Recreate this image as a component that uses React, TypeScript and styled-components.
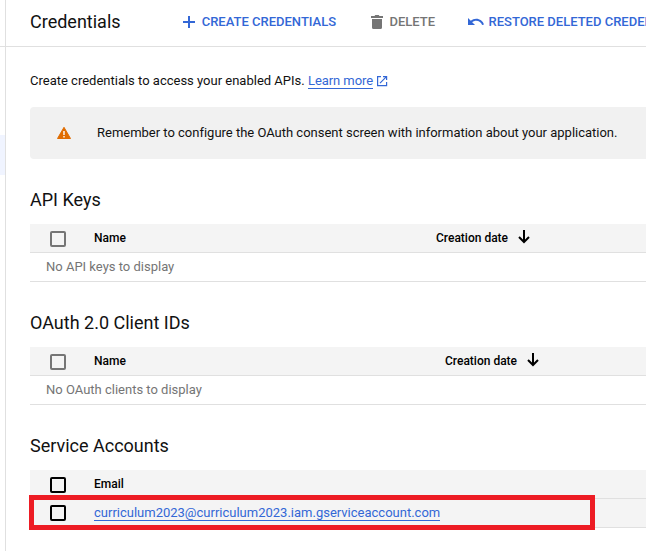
import React from "react";
import styled, { createGlobalStyle } from "styled-components";

const BLUE = "#3367d6";
const LINE = "#e0e0e0";

const GlobalStyle = createGlobalStyle`
  * { box-sizing: border-box; }
  html, body { margin: 0; overflow: hidden; background: #fff; }
  body { font-family: Roboto, "Liberation Sans", sans-serif; font-size: 13px; color: #111; }
  svg { display: block; flex: none; }
`;

const Page = styled.div`
  display: flex;
  width: 646px;
  height: 551px;
  overflow: hidden;
`;

const SideNav = styled.nav`
  flex: none;
  width: 6px;
  border-right: 1px solid ${LINE};
`;

const SideNavHeader = styled.div`
  height: 47px;
  border-bottom: 1px solid ${LINE};
`;

const SideNavActive = styled.div`
  height: 40px;
  margin-top: 88px;
  background: #f0f4ff;
`;

const Main = styled.main`
  flex: 1;
  min-width: 0;
`;

const Toolbar = styled.header`
  display: flex;
  align-items: center;
  height: 47px;
  padding: 0 0 3px 24px;
  border-bottom: 1px solid ${LINE};
  white-space: nowrap;
  overflow: hidden;
`;

const PageTitle = styled.h1`
  flex: none;
  width: 151px;
  margin: 0;
  font-size: 18px;
  font-weight: 400;
  line-height: 24px;
`;

const ToolButton = styled.button<{ $width: number; $gap: number; $muted?: boolean }>`
  display: flex;
  flex: none;
  align-items: center;
  gap: ${(p) => p.$gap}px;
  width: ${(p) => p.$width}px;
  padding: 0;
  border: 0;
  background: none;
  color: ${(p) => (p.$muted ? "#757575" : BLUE)};
  font: 500 13px/16px Roboto, sans-serif;
  white-space: nowrap;
`;

const Content = styled.div`
  padding-left: 24px;
`;

const Intro = styled.p`
  display: flex;
  align-items: center;
  height: 20px;
  margin: 24px 0 0;
  line-height: 20px;
  white-space: pre;
`;

const Link = styled.a`
  color: ${BLUE};
  line-height: 15px;
  border-bottom: 1px solid ${BLUE};
  text-decoration: none;
`;

const LearnMore = styled(Link)`
  letter-spacing: -0.06px;
`;

const LaunchIcon = styled.svg`
  margin-left: 3px;
`;

const Banner = styled.div`
  display: flex;
  align-items: center;
  height: 52px;
  margin-top: 16px;
  padding-left: 26px;
  gap: 25px;
  border-radius: 4px 0 0 4px;
  background: #f1f1f1;
  white-space: nowrap;
`;

const BannerText = styled.span`
  padding-bottom: 2px;
  letter-spacing: -0.01px;
`;

const Section = styled.section`
  margin-top: 29px;
`;

const SectionTitle = styled.h2`
  height: 24px;
  margin: 0 0 12px;
  font-size: 18px;
  font-weight: 400;
  line-height: 24px;
`;

const HeaderRow = styled.div`
  display: flex;
  align-items: center;
  height: 29px;
  padding-left: 20px;
  border-bottom: 1px solid ${LINE};
  background: #f4f4f4;
  color: #000;
  font-size: 12px;
  font-weight: 500;
`;

const DataRow = styled(HeaderRow)`
  font-size: 13px;
  font-weight: 400;
`;

const EmptyRow = styled.div`
  height: 29px;
  padding-left: 16px;
  border-bottom: 1px solid ${LINE};
  color: #757575;
  line-height: 28px;
`;

const Checkbox = styled.span<{ $strong?: boolean; $offset?: number }>`
  flex: none;
  width: 16px;
  height: 16px;
  margin: ${(p) => p.$offset ?? 2}px 28px 0 0;
  border: 2px solid ${(p) => (p.$strong ? "#000" : "#757575")};
  border-radius: 2px;
`;

const NameCell = styled.span<{ $width: number }>`
  flex: none;
  width: ${(p) => p.$width}px;
`;

const SortCell = styled.span`
  display: flex;
  align-items: center;
  gap: 10px;
  white-space: nowrap;
`;

const ArrowIcon = styled.svg`
  margin-bottom: 2px;
`;

const AccountArea = styled.div`
  position: relative;
`;

const Highlight = styled.div`
  position: absolute;
  top: 25px;
  left: -1px;
  width: 566px;
  height: 35px;
  border: 5px solid #ed1c24;
  pointer-events: none;
`;

function SortArrow() {
  return (
    <ArrowIcon width="12" height="14" viewBox="0 0 12 14" fill="none" stroke="#000" strokeWidth="2">
      <path d="M6 0v12M1 7l5 5 5-5" />
    </ArrowIcon>
  );
}

function EmptyTable({ title, nameWidth, message }: { title: string; nameWidth: number; message: string }) {
  return (
    <Section>
      <SectionTitle>{title}</SectionTitle>
      <HeaderRow>
        <Checkbox />
        <NameCell $width={nameWidth}>Name</NameCell>
        <SortCell>
          Creation date
          <SortArrow />
        </SortCell>
      </HeaderRow>
      <EmptyRow>{message}</EmptyRow>
    </Section>
  );
}

export default function App() {
  return (
    <Page>
      <GlobalStyle />
      <SideNav>
        <SideNavHeader />
        <SideNavActive />
      </SideNav>
      <Main>
        <Toolbar>
          <PageTitle>Credentials</PageTitle>
          <ToolButton $width={190} $gap={6.7}>
            <svg width="14" height="12" viewBox="0 0 14 12" fill="currentColor">
              <path d="M2 5h5V0h2v5h5v2H9v5H7V7H2z" />
            </svg>
            CREATE CREDENTIALS
          </ToolButton>
          <ToolButton $width={97} $gap={6.4} $muted>
            <svg width="12" height="14" viewBox="0 0 12 14" fill="currentColor">
              <path d="M0 1h3.500l.8-1h3.400l.8 1H12v2H0zM1 4h10v8.500q0 1.500-1.500 1.500h-7Q1 14 1 12.500z" />
            </svg>
            DELETE
          </ToolButton>
          <ToolButton $width={240} $gap={4.5}>
            <svg width="16" height="7" viewBox="2 7 20.500 9" preserveAspectRatio="none" fill="currentColor">
              <path d="M12.500 8c-2.650 0-5.050.99-6.900 2.600L2 7v9h9l-3.620-3.620c1.390-1.160 3.160-1.880 5.120-1.880 3.540 0 6.550 2.310 7.600 5.500l2.370-.78C21.080 11.030 17.150 8 12.500 8z" />
            </svg>
            RESTORE DELETED CREDENTIALS
          </ToolButton>
        </Toolbar>
        <Content>
          <Intro>
            {"Create credentials to access your enabled APIs. "}
            <LearnMore>Learn more</LearnMore>
            <LaunchIcon width="12" height="12" viewBox="0 0 12 12" fill="none" stroke={BLUE} strokeWidth="1.200">
              <path d="M5 1.600H1.600v9h9V7M7 1.600h3.600V5M10.500 1.700L4 8.200" />
            </LaunchIcon>
          </Intro>
          <Banner>
            <svg width="16" height="14" viewBox="0 0 16 14">
              <path d="M8 1.300L14.500 12.500H1.500z" fill="#e06c00" stroke="#e06c00" strokeLinejoin="round" />
              <path d="M7.300 5h1.400v4H7.300zM7.300 10h1.400v1.500H7.300z" fill="#fff" />
            </svg>
            <BannerText>Remember to configure the OAuth consent screen with information about your application.</BannerText>
          </Banner>
          <EmptyTable title="API Keys" nameWidth={342} message="No API keys to display" />
          <EmptyTable title="OAuth 2.0 Client IDs" nameWidth={351} message="No OAuth clients to display" />
          <Section>
            <SectionTitle>Service Accounts</SectionTitle>
            <AccountArea>
              <HeaderRow>
                <Checkbox $strong />
                Email
              </HeaderRow>
              <DataRow>
                <Checkbox $strong $offset={0} />
                <Link>curriculum2023@curriculum2023.iam.gserviceaccount.com</Link>
              </DataRow>
              <Highlight />
            </AccountArea>
          </Section>
        </Content>
      </Main>
    </Page>
  );
}
